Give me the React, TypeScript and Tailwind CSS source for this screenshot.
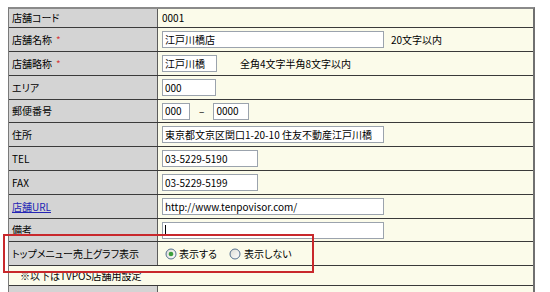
import React from 'react';

const font = { fontFamily: '"Noto Sans CJK JP", "Noto Sans", sans-serif' };

interface RowProps {
  label: React.ReactNode;
  h: string;
  children?: React.ReactNode;
}

const Row: React.FC<RowProps> = ({ label, h, children }) => (
  <div className={`flex border-b border-[#3a3a3a] ${h}`}>
    <div className="w-[149px] shrink-0 flex items-center pl-[3px] bg-[#d4d4d4] border-r border-[#5c5c5c]">
      {label}
    </div>
    <div className="flex-1 flex items-center pl-[4px] bg-[#fbfbea]">{children}</div>
  </div>
);

const Field: React.FC<{ w: string; value?: string; caret?: boolean }> = ({ w, value, caret }) => (
  <div
    className={`${w} h-[17px] shrink-0 flex items-center pl-[2px] bg-white border border-[#9ba3ad] overflow-hidden whitespace-nowrap`}
  >
    {caret && <span className="w-px h-[11px] bg-black" />}
    {value}
  </div>
);

const Radio: React.FC<{ checked?: boolean }> = ({ checked }) => (
  <svg width="12" height="12" viewBox="0 0 12 12" className="shrink-0">
    <defs>
      <linearGradient id="rg" x1="0" y1="0" x2="1" y2="1">
        <stop offset="0" stopColor="#dcdcd4" />
        <stop offset="1" stopColor="#ffffff" />
      </linearGradient>
    </defs>
    <circle cx="6" cy="6" r="5" fill="url(#rg)" stroke="#55708f" strokeWidth="1" />
    {checked && <circle cx="6" cy="6" r="2.3" fill="#3c9f3c" />}
  </svg>
);

const Req = () => <span className="ml-[4px] text-[#d83c3c]">*</span>;

export default function App() {
  return (
    <div
      className="relative w-[550px] h-[292px] overflow-hidden bg-white text-[10px] leading-none text-black [font-feature-settings:'palt']"
      style={font}
    >
      <div className="ml-[8px] mt-[7px] w-[527px] border-t-2 border-l border-r-2 border-t-[#8a8a8a] border-l-[#7a7a7a] border-r-[#707070]">
        <Row label="店舗コード" h="h-[19px]">
          0001
        </Row>
        <Row
          label={
            <>
              店舗名称
              <Req />
            </>
          }
          h="h-[24px]"
        >
          <Field w="w-[222px]" value="江戸川橋店" />
          <span className="ml-[7px]">20文字以内</span>
        </Row>
        <Row
          label={
            <>
              店舗略称
              <Req />
            </>
          }
          h="h-[24px]"
        >
          <Field w="w-[55px]" value="江戸川橋" />
          <span className="ml-[23px]">全角4文字半角8文字以内</span>
        </Row>
        <Row label="エリア" h="h-[24px]">
          <Field w="w-[54px]" value="000" />
        </Row>
        <Row label="郵便番号" h="h-[23px]">
          <Field w="w-[28px]" value="000" />
          <span className="mx-[9px]">–</span>
          <Field w="w-[36px]" value="0000" />
        </Row>
        <Row label="住所" h="h-[24px]">
          <Field w="w-[222px]" value="東京都文京区関口1-20-10  住友不動産江戸川橋" />
        </Row>
        <Row label="TEL" h="h-[24px]">
          <Field w="w-[96px]" value="03-5229-5190" />
        </Row>
        <Row label="FAX" h="h-[24px]">
          <Field w="w-[96px]" value="03-5229-5199" />
        </Row>
        <Row label={<span className="text-[#2424b4] underline">店舗URL</span>} h="h-[24px]">
          <Field w="w-[222px]" value="http://www.tenpovisor.com/" />
        </Row>
        <Row label="備考" h="h-[23px]">
          <Field w="w-[222px]" caret />
        </Row>
        <Row label="トップメニュー売上グラフ表示" h="h-[24px]">
          <div className="flex items-center ml-[3px]">
            <Radio checked />
            <span className="ml-[2px]">表示する</span>
            <span className="ml-[12px] flex items-center">
              <Radio />
              <span className="ml-[3px]">表示しない</span>
            </span>
          </div>
        </Row>
        <div className="h-[20px] flex items-center pl-[11px] bg-[#fbfbea] border-b border-[#3a3a3a]">
          ※以下はTVPOS店舗用設定
        </div>
        <div className="h-[20px] flex">
          <div className="w-[149px] shrink-0 bg-[#d4d4d4] border-r border-[#5c5c5c]" />
          <div className="flex-1 bg-[#fbfbea]" />
        </div>
      </div>

      {/* highlight box */}
      <div className="absolute left-[3px] top-[234px] w-[311px] h-[39px] border-2 border-[#c8282c]" />
    </div>
  );
}
